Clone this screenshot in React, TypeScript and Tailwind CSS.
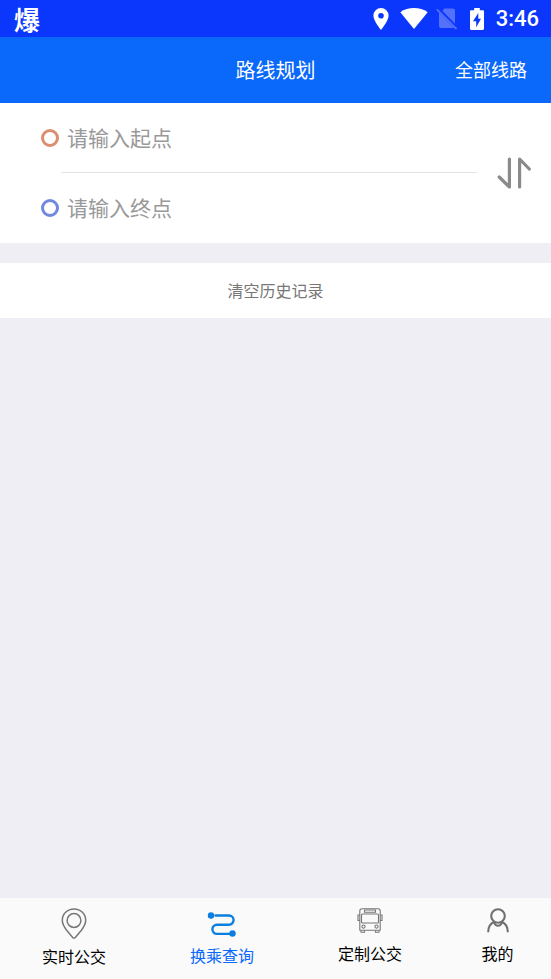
import { ReactNode } from "react"


function StatusBar() {
    return (
        <div className="flex h-[37px] items-center justify-between bg-[#0a37fb] pl-[14px] pr-3 text-white">
            <div className="text-[26px] font-bold leading-[36px]">爆</div>
            <div className="flex items-center">
                <svg width="16" height="22" viewBox="0 0 16 22" fill="currentColor">
                    <path fillRule="evenodd" d="M8 0a7.6 7.6 0 0 0-7.6 7.6C.4 13.2 8 22 8 22s7.6-8.8 7.6-14.4A7.6 7.6 0 0 0 8 0zm0 4.9a2.8 2.8 0 1 1 0 5.6 2.8 2.8 0 0 1 0-5.6z" />
                </svg>
                <svg className="ml-[11px]" width="28" height="22" viewBox="0 0 28 22" fill="currentColor">
                    <path d="M0.3 4.2C4.2 1.200 9 0 14 0s9.800 1.200 13.700 4.200L14 21z" />
                </svg>
                <svg className="ml-2" width="22" height="22" viewBox="0 0 22 22" fill="#5471fc">
                    <path d="M8.300 .5H17a2 2 0 0 1 2 2v13.300L6.500 3.100z" />
                    <path d="M3 4.700 18 19.900H5a2 2 0 0 1-2-2z" />
                    <path d="M.8 1.300 20.500 21" stroke="#5471fc" strokeWidth="1.800" />
                </svg>
                <svg className="ml-3" width="14" height="22" viewBox="0 0 14 22" fill="currentColor">
                    <path fillRule="evenodd" d="M4.200 0h5.600v2.200h3c.8 0 1.200.5 1.200 1.200v17.400c0 .7-.5 1.200-1.200 1.200H1.200C.5 22 0 21.500 0 20.800V3.400c0-.7.4-1.200 1.200-1.200h3zM8.300 5 3 13.200h3.200v6.100L11 10.800H8.300z" />
                </svg>
                <div className="ml-3 font-['Roboto'] text-[22px] font-medium leading-none">3:46</div>
            </div>
        </div>
    )
}

function Header() {
    return (
        <header className="grid h-[66px] grid-cols-[1fr_auto_1fr] items-center bg-[#0a68fb] pr-6 pl-6 text-white">
            <h1 className="col-start-2 text-xl">路线规划</h1>
            <button type="button" className="justify-self-end pb-[2px] text-lg">全部线路</button>
        </header>
    )
}

function PlaceInput({ label, ring }: { label: string, ring: string }) {
    return (
        <label className="flex h-[70px] items-center gap-2 pl-[41px]">
            <span className={"size-[18px] shrink-0 rounded-full border-3 " + ring}></span>
            <input
                type="text"
                aria-label={label}
                placeholder={label}
                className="h-10 w-full min-w-0 bg-transparent pb-[2px] text-[21px] text-gray-800 outline-none placeholder:text-[#999999]"
            />
        </label>
    )
}

function RouteForm() {
    return (
        <form className="flex items-center bg-white pr-5">
            <div className="min-w-0 flex-1">
                <PlaceInput label="请输入起点" ring="border-[#d98f70]" />
                <div className="-mt-px ml-[61px] h-px bg-[#e3e3e3]"></div>
                <PlaceInput label="请输入终点" ring="border-[#7289dd]" />
            </div>
            <button type="button" aria-label="交换起点和终点" className="ml-5">
                <svg width="34" height="32" viewBox="0 0 34 32" fill="none" stroke="#8a8a8a" strokeWidth="3.200" strokeLinecap="round" strokeLinejoin="round">
                    <path d="M12.400 2v28L2.200 20" />
                    <path d="M22.600 30V2l9.700 10" />
                </svg>
            </button>
        </form>
    )
}

function PinIcon() {
    return (
        <svg width="26" height="32" viewBox="0 0 26 32" fill="none" stroke="#777777" strokeWidth="1.500">
            <path d="M13 1C6.300 1 1.300 6 1.300 12.300c0 3.600 2 6.900 4.300 9.900l6.100 7.200c.8.900 1.800.9 2.600 0l6.100-7.200c2.300-3 4.300-6.300 4.300-9.900C24.700 6 19.700 1 13 1z" />
            <circle cx="13" cy="12.500" r="6.900" />
        </svg>
    )
}

function RouteIcon() {
    return (
        <svg width="30" height="26" viewBox="0 0 30 26" fill="none" stroke="#0a7fe0" strokeWidth="2.400" strokeLinecap="round">
            <path d="M8.500 3.500H22a4.600 4.600 0 0 1 0 9.200H10a4.600 4.600 0 0 0 0 9.200H23" />
            <circle cx="4" cy="3.500" r="3.200" fill="#0a7fe0" stroke="none" />
            <circle cx="25.500" cy="21.500" r="3.200" fill="#0a7fe0" stroke="none" />
        </svg>
    )
}

function BusIcon() {
    return (
        <svg width="26" height="26" viewBox="0 0 26 26" fill="none" stroke="#777777" strokeWidth="1.100">
            <path d="M5 .8h16c1.400 0 2.200.9 2.200 2.200v19.200H2.800V3C2.800 1.700 3.600.8 5 .8z" />
            <path d="M7.500 2h11v2.200h-11z" />
            <rect x="4.500" y="6" width="17" height="9" rx="1" />
            <path d="M2.800 7H1v5.500h1.800M23.200 7H25v5.500h-1.800" />
            <circle cx="6.500" cy="18.600" r="1.600" />
            <circle cx="19.500" cy="18.600" r="1.600" />
            <path d="M4 22.500v1.700h3.500v-1.700M18.500 22.500v1.700H22v-1.700" />
        </svg>
    )
}

function UserIcon() {
    return (
        <svg width="24" height="26" viewBox="0 0 24 26" fill="none" stroke="#707070" strokeWidth="2.100">
            <circle cx="12" cy="8" r="6.800" />
            <path d="M2.200 24.200c0-5.300 2.400-8.900 6.200-10.200M21.800 24.200c0-5.300-2.400-8.900-6.200-10.200" />
            <path d="M8 13.800c.6 2.700 2 4 4 4s3.400-1.300 4-4" />
        </svg>
    )
}

function Tab({ label, icon, className }: { label: string, icon: ReactNode, className: string }) {
    return (
        <a href="#" className={"flex flex-col items-center text-base " + className}>
            {icon}
            <span>{label}</span>
        </a>
    )
}

function App() {
    return (
        <div className="flex min-h-screen flex-col bg-[#efeef4] font-['Noto_Sans_CJK_SC',sans-serif]">
            <StatusBar />
            <Header />
            <main className="flex flex-1 flex-col gap-5">
                <RouteForm />
                <button type="button" className="h-[55px] bg-white pb-[2px] text-base text-[#777777]">清空历史记录</button>
            </main>
            <nav className="grid h-[81px] grid-cols-[18fr_18fr_18fr_13fr] bg-[#fafafa]">
                <Tab label="实时公交" icon={<PinIcon />} className="gap-1 pt-[10px] text-black" />
                <Tab label="换乘查询" icon={<RouteIcon />} className="gap-[5px] pt-[14px] text-[#0a68fb]" />
                <Tab label="定制公交" icon={<BusIcon />} className="gap-[7px] pt-[10px] text-black" />
                <Tab label="我的" icon={<UserIcon />} className="gap-[7px] pt-[10px] text-black" />
            </nav>
        </div>
    )
}

export default App
